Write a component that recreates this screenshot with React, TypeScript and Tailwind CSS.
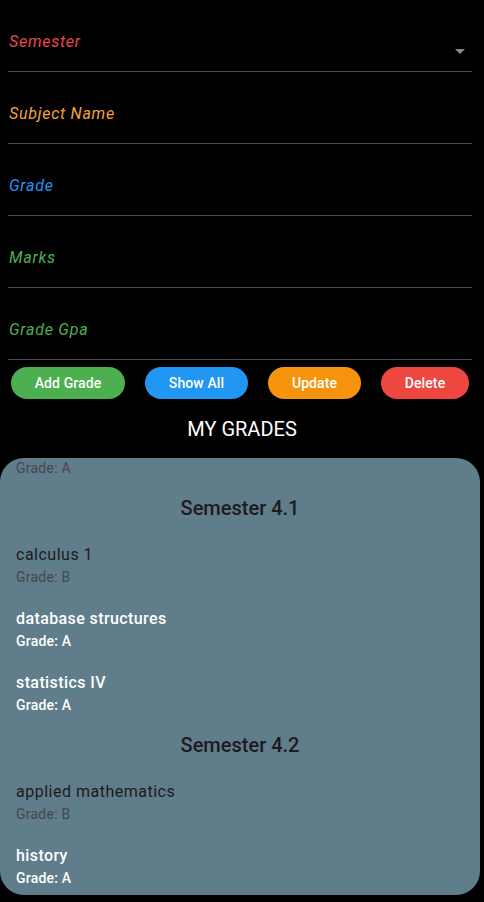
import React from "react";

const fields = [
    { label: "Semester", color: "text-[#ea4a47]", dropdown: true },
    { label: "Subject Name", color: "text-[#f5a23a]" },
    { label: "Grade", color: "text-[#2196f3]" },
    { label: "Marks", color: "text-[#4caf50]" },
    { label: "Grade Gpa", color: "text-[#4caf50]" },
];

const buttons = [
    { label: "Add Grade", cls: "w-[114px] bg-[#4caf50]" },
    { label: "Show All", cls: "w-[103px] bg-[#2196f3]" },
    { label: "Update", cls: "w-[93px] bg-[#f7940d]" },
    { label: "Delete", cls: "w-[88px] bg-[#ee4740]" },
];

type Item = { name: string; grade: string; done?: boolean };

const semesters: { title: string; items: Item[] }[] = [
    {
        title: "Semester 4.1",
        items: [
            { name: "calculus 1", grade: "B" },
            { name: "database structures", grade: "A", done: true },
            { name: "statistics IV", grade: "A", done: true },
        ],
    },
    {
        title: "Semester 4.2",
        items: [
            { name: "applied mathematics", grade: "B" },
            { name: "history", grade: "A", done: true },
        ],
    },
];

const GradeTile = ({ name, grade, done }: Item) => (
    <div className="h-16 shrink-0 px-4 pt-2">
        {done ? (
            <>
                <p className="text-base leading-6 font-medium tracking-[0.4px] text-white">{name}</p>
                <p className="text-sm leading-5 font-medium tracking-[0.2px] text-white">Grade: {grade}</p>
            </>
        ) : (
            <>
                <p className="text-base leading-6 tracking-[0.5px] text-[#1d1b20]">{name}</p>
                <p className="text-sm leading-5 tracking-[0.25px] text-[#49454f]">Grade: {grade}</p>
            </>
        )}
    </div>
);

const App = () => {
    return (
        <div className="w-[484px] h-[902px] bg-black overflow-hidden font-['Roboto',sans-serif]">
            <div className="ml-2 mr-3">
                {fields.map(({ label, color, dropdown }) => (
                    <div key={label} className="relative h-[72px] border-b border-[#4f4e55] pt-[32px] pl-px">
                        <span className={`block text-base leading-5 italic tracking-[0.75px] ${color}`}>{label}</span>
                        {dropdown && (
                            <svg className="absolute right-[7px] top-[49px]" width="10" height="5" viewBox="0 0 10 5">
                                <path d="M0 0 L10 0 L5 5 Z" fill="#8a8a8e" />
                            </svg>
                        )}
                    </div>
                ))}
            </div>

            <div className="flex items-center gap-5 pl-[11px] mt-[7px]">
                {buttons.map(({ label, cls }) => (
                    <button key={label} className={`h-8 rounded-full text-sm font-medium tracking-[0.1px] text-white ${cls}`}>
                        {label}
                    </button>
                ))}
            </div>

            <h2 className="mt-[16px] text-center text-xl leading-7 text-white">MY GRADES</h2>

            <div className="mt-[15px] w-[480px] h-[437px] rounded-[24px] bg-[#607d8b] overflow-hidden">
                <div className="flex flex-col -mt-[32px]">
                    <div className="h-16 shrink-0 px-4 pt-8">
                        <p className="text-sm leading-5 tracking-[0.25px] text-[#49454f]">Grade: A</p>
                    </div>
                    {semesters.map(({ title, items }) => (
                        <div key={title} className="flex flex-col">
                            <div className="h-[45px] shrink-0 pt-[7px]">
                                <h3 className="text-center text-xl leading-[22px] font-medium text-[#1d1b20]">{title}</h3>
                            </div>
                            {items.map((item) => (
                                <GradeTile key={item.name} {...item} />
                            ))}
                        </div>
                    ))}
                </div>
            </div>
        </div>
    );
};

export default App;
